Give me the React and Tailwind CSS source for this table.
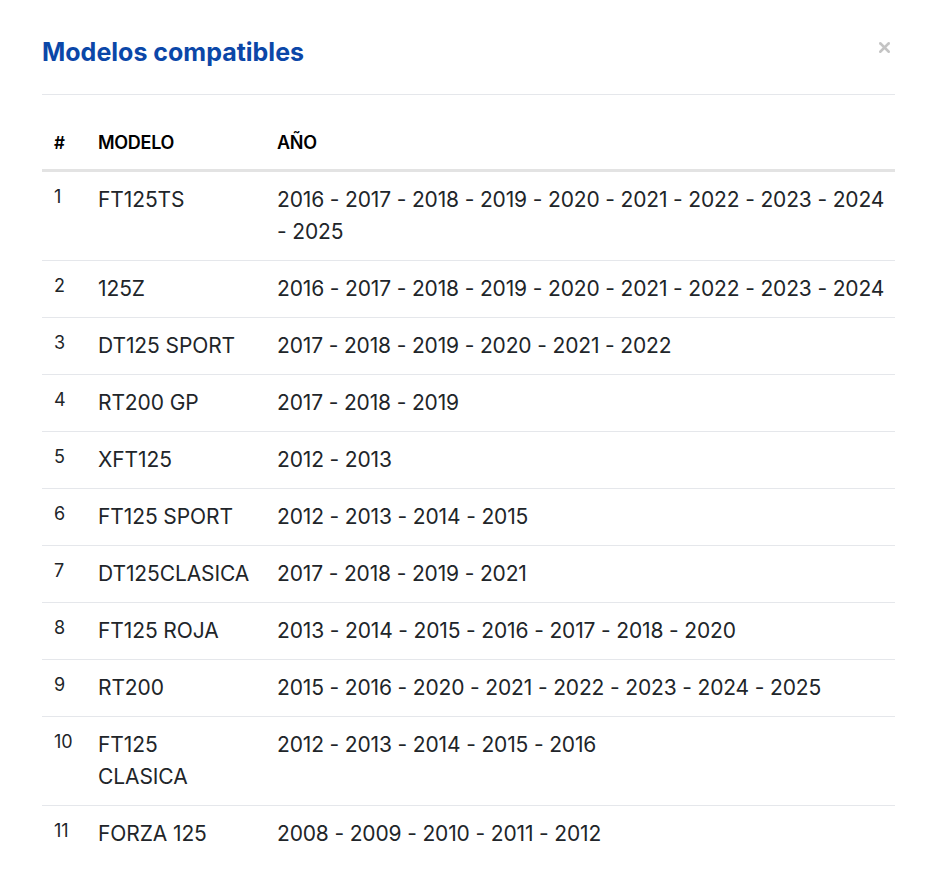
import { X } from "lucide-react";

const modelos = [
  { modelo: "FT125TS", anos: "2016 - 2017 - 2018 - 2019 - 2020 - 2021 - 2022 - 2023 - 2024 - 2025" },
  { modelo: "125Z", anos: "2016 - 2017 - 2018 - 2019 - 2020 - 2021 - 2022 - 2023 - 2024" },
  { modelo: "DT125 SPORT", anos: "2017 - 2018 - 2019 - 2020 - 2021 - 2022" },
  { modelo: "RT200 GP", anos: "2017 - 2018 - 2019" },
  { modelo: "XFT125", anos: "2012 - 2013" },
  { modelo: "FT125 SPORT", anos: "2012 - 2013 - 2014 - 2015" },
  { modelo: "DT125CLASICA", anos: "2017 - 2018 - 2019 - 2021" },
  { modelo: "FT125 ROJA", anos: "2013 - 2014 - 2015 - 2016 - 2017 - 2018 - 2020" },
  { modelo: "RT200", anos: "2015 - 2016 - 2020 - 2021 - 2022 - 2023 - 2024 - 2025" },
  { modelo: "FT125 CLASICA", anos: "2012 - 2013 - 2014 - 2015 - 2016" },
  { modelo: "FORZA 125", anos: "2008 - 2009 - 2010 - 2011 - 2012" },
];

const App = () => {
  return (
    <div className="min-h-screen bg-white px-[42px] text-[#212529]" style={{ fontFamily: "Inter, 'Noto Sans', sans-serif" }}>
      <div className="flex items-start justify-between border-b border-[#e5e7eb] pt-[37px] pb-[27px]">
        <h2 className="text-[25px] font-bold leading-[30px] text-[#0b47a8]">Modelos compatibles</h2>
        <button type="button" className="mt-[2px] mr-[2px] text-[#c4c4c4]">
          <X size={17} strokeWidth={3.5} />
        </button>
      </div>

      <table className="mt-[24px] w-full table-fixed border-collapse text-left">
        <thead>
          <tr className="border-b-[3px] border-[#e3e3e3] text-black">
            <th className="w-[56px] pt-3 pb-[14px] pl-3 text-[17px] font-semibold leading-6">#</th>
            <th className="w-[179px] pt-3 pb-[14px] text-[18px] font-semibold leading-6 tracking-[-0.3px]">MODELO</th>
            <th className="pt-3 pb-[14px] text-[18px] font-semibold leading-6 tracking-[-0.3px]">AÑO</th>
          </tr>
        </thead>
        <tbody>
          {modelos.map((m, i) => (
            <tr key={i} className="border-b border-[#e5e7eb] last:border-b-0">
              <td className="pt-[13px] pb-3 pl-3 align-top text-[18px] leading-6">{i + 1}</td>
              <td className="py-3 pr-[26px] align-top text-[21px] leading-8 tracking-[-0.1px]">{m.modelo}</td>
              <td className="py-3 pr-2 align-top text-[21px] leading-8 tracking-[-0.15px]">{m.anos}</td>
            </tr>
          ))}
        </tbody>
      </table>
    </div>
  );
};

export default App;
